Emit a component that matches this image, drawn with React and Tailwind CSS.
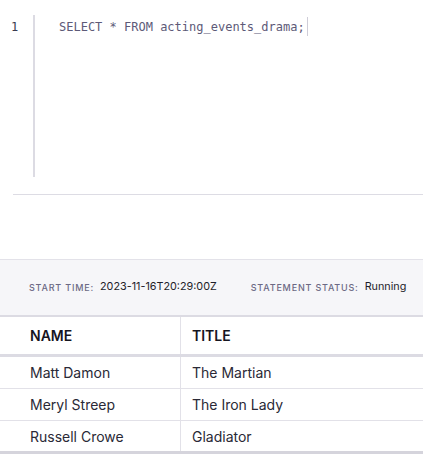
export default function App() {
  const rows = [
    ["Matt Damon", "The Martian", "h-[32px] border-b border-[#e2e1e8]"],
    ["Meryl Streep", "The Iron Lady", "h-[32px] border-b border-[#e2e1e8]"],
    ["Russell Crowe", "Gladiator", "h-[30px]"],
  ];
  return (
    <div className="w-[423px] h-[454px] overflow-hidden bg-white" style={{ fontFamily: "Inter, 'Noto Sans', sans-serif" }}>
      {/* Editor */}
      <div className="flex pt-[15px]">
        <div className="w-[33px] shrink-0 pl-[11px] pt-[2px] text-[12px] leading-[20px] text-[#3b3a4f]" style={{ fontFamily: "'DejaVu Sans Mono', monospace" }}>
          1
        </div>
        <div className="h-[162px] flex-1 border-l-2 border-[#dcdbe3] pl-[24px] pt-[1px]">
          <div className="flex items-center whitespace-nowrap text-[12px] leading-[20px] text-[#5d5a78]" style={{ fontFamily: "'DejaVu Sans Mono', monospace" }}>
            <span className="pt-[1px]">SELECT * FROM acting_events_drama;</span>
            <span className="ml-[2px] inline-block w-[1px] h-[19px] bg-[#cfcdd8]"></span>
          </div>
        </div>
      </div>
      <div className="ml-[13px] mt-[17px] border-t border-[#dddce4]"></div>

      {/* Status band */}
      <div className="mt-[64px] border-t border-[#e3e2e9] border-b-2 border-b-[#dcdbe3] bg-[#f6f6f9] h-[58px] flex items-center pl-[29px] whitespace-nowrap">
        <span className="text-[9px] tracking-[0.09em] font-medium text-[#6c6984]">START TIME:</span>
        <span className="ml-[6px] text-[10.8px] text-[#1e1d2a]">2023-11-16T20:29:00Z</span>
        <span className="ml-[34px] text-[9px] tracking-[0.09em] font-medium text-[#6c6984]">STATEMENT STATUS:</span>
        <span className="ml-[6px] text-[10.8px] text-[#1e1d2a]">Running</span>
      </div>

      {/* Table */}
      <div className="flex h-[40px] border-b-[3px] border-[#dcdbe3]">
        <div className="w-[181px] shrink-0 border-r border-[#e2e1e8] pl-[30px] flex items-center text-[14px] font-semibold text-[#16151f]">NAME</div>
        <div className="flex-1 pl-[11px] flex items-center text-[14px] font-semibold text-[#16151f]">TITLE</div>
      </div>
      {rows.map(([n, t, cls], i) => (
        <div key={i} className={"flex " + cls}>
          <div className="w-[181px] shrink-0 border-r border-[#e2e1e8] pl-[30px] flex items-center text-[14px] text-[#2a2936]">{n}</div>
          <div className="flex-1 pl-[11px] flex items-center text-[14px] text-[#2a2936]">{t}</div>
        </div>
      ))}
      <div className="h-[6px] bg-[#d5d4dc]"></div>
    </div>
  );
}
